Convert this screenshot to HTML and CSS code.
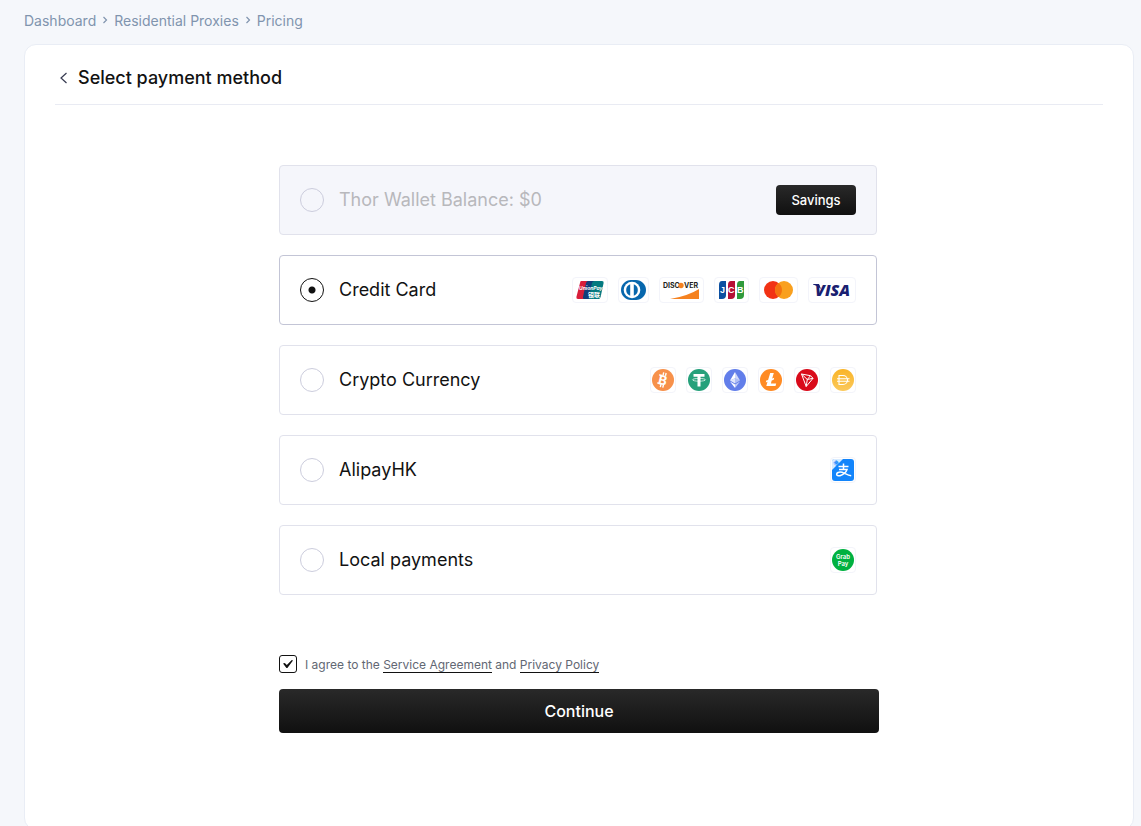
FILE: index.html
```html
<!DOCTYPE html>
<html lang="en">
<head>
  <meta charset="UTF-8" />
  <meta name="viewport" content="width=device-width, initial-scale=1.0"/>
  <title>Select payment method</title>
  <link rel="stylesheet" href="styles.css">
</head>
<body>
  <nav class="breadcrumb">
    <a href="#">Dashboard</a>
    <svg width="6" height="8" viewBox="0 0 6 8"><path d="M1.5 1l3 3-3 3"/></svg>
    <a href="#">Residential Proxies</a>
    <svg width="6" height="8" viewBox="0 0 6 8"><path d="M1.5 1l3 3-3 3"/></svg>
    <a href="#">Pricing</a>
  </nav>

  <main class="card">
    <header class="card-header">
      <a class="back" href="#" aria-label="Back">
        <svg width="8" height="12" viewBox="0 0 8 12"><path d="M6.500 1L1 6l5.500 5"/></svg>
      </a>
      <h1>Select payment method</h1>
    </header>

    <form class="payment">
      <div class="options">
        <div class="option disabled">
          <label><input type="radio" name="method" disabled> Thor Wallet Balance: $0</label>
          <button type="button" class="savings">Savings</button>
        </div>

        <div class="option selected">
          <label><input type="radio" name="method" checked> Credit Card</label>
          <div class="logos">
            <!-- UnionPay -->
            <span class="logo">
              <svg width="30" height="20" viewBox="0 0 30 20">
                <path fill="#d81e3a" d="M6 1h8l-4 18H3q-2 0-1.600-2L5 3q.3-2 1-2z"/>
                <path fill="#123f7a" d="M13 1h7l-4 18H9q-1.500 0-1-2l3-14q.5-2 2-2z"/>
                <path fill="#047a80" d="M20 1h7q2 0 1.600 2l-3 14q-.5 2-2 2H15q-1.500 0-1-2l3-14q.5-2 3-2z"/>
                <text class="union" x="4" y="10">UnionPay</text>
                <text class="union-cn" x="13" y="17">银联</text>
              </svg>
            </span>
            <!-- Diners Club -->
            <span class="logo">
              <svg width="25" height="20" viewBox="0 0 25 20">
                <path fill="#0767ad" d="M10 0h5c5.500 0 10 4.500 10 10s-4.500 10-10 10h-5C4.500 20 0 15.500 0 10S4.500 0 10 0z"/>
                <circle cx="11" cy="10" r="8.300" fill="#fff"/>
                <path fill="#0767ad" d="M9.200 4.200a6.200 6.200 0 0 0 0 11.600zM12.800 4.200a6.200 6.200 0 0 1 0 11.600z"/>
              </svg>
            </span>
            <!-- Discover -->
            <span class="logo">
              <svg width="39" height="20" viewBox="0 0 39 20">
                <path fill="#f58220" d="M37 9v10H8Q26 16 37 9z"/>
                <text class="discover" x="1" y="8">DISC</text>
                <circle cx="19" cy="5.500" r="2.700" fill="#f58220"/>
                <text class="discover" x="22" y="8">VER</text>
              </svg>
            </span>
            <!-- JCB -->
            <span class="logo">
              <svg width="29" height="20" viewBox="-1 0 29 20">
                <path fill="#0b4fa0" d="M4 1h4v14q0 4-4 4H1V5q0-4 3-4z"/>
                <path fill="#b60f35" d="M13 1h4v14q0 4-4 4h-3V5q0-4 3-4z"/>
                <path fill="#2f9a3c" d="M22 1h4v14q0 4-4 4h-3V5q0-4 3-4z"/>
                <text class="jcb" x="2" y="13">J</text>
                <text class="jcb" x="10" y="13">C</text>
                <text class="jcb" x="19" y="13">B</text>
              </svg>
            </span>
            <!-- Mastercard -->
            <span class="logo">
              <svg width="33" height="20" viewBox="-1 0 33 20">
                <circle cx="10" cy="10" r="9" fill="#f23214"/>
                <circle cx="21" cy="10" r="9" fill="#f9a01e"/>
                <path fill="#f4720f" d="M15.500 2.900a9 9 0 0 1 0 14.200 9 9 0 0 1 0-14.200z"/>
              </svg>
            </span>
            <!-- Visa -->
            <span class="logo">
              <svg width="42" height="20" viewBox="0 0 42 20">
                <path fill="#1a1f71" d="M2 4h6l2 5Q7 5.500 2 4.500z"/>
                <text class="visa" x="4" y="16">VISA</text>
              </svg>
            </span>
          </div>
        </div>

        <div class="option">
          <label><input type="radio" name="method"> Crypto Currency</label>
          <div class="logos">
            <!-- Bitcoin -->
            <span class="logo square">
              <svg width="22" height="22" viewBox="0 0 22 22">
                <circle cx="11" cy="11" r="11" fill="#f7914b"/>
                <g transform="rotate(13 11 11)">
                  <path stroke="#fff" stroke-width="1.400" d="M10 3.500v3M12.500 3.500v3M10 15.500v3M12.500 15.500v3M6 6.900h3M6 15.100h3"/>
                  <text class="coin" x="6.500" y="15.800">B</text>
                </g>
              </svg>
            </span>
            <!-- Tether -->
            <span class="logo square">
              <svg width="22" height="22" viewBox="0 0 22 22">
                <circle cx="11" cy="11" r="11" fill="#26a17b"/>
                <path fill="#fff" d="M5.500 5h11v2.800h-4V17.500h-3V7.800h-4z"/>
                <ellipse cx="11" cy="10.800" rx="6.500" ry="1.400" fill="none" stroke="#fff" stroke-width=".7"/>
              </svg>
            </span>
            <!-- Ethereum -->
            <span class="logo square">
              <svg width="22" height="22" viewBox="0 0 22 22">
                <circle cx="11" cy="11" r="11" fill="#627eea"/>
                <path fill="#fff" opacity=".7" d="M11 3v6.200l5 2.200z"/>
                <path fill="#fff" d="M11 3L6 11.400l5-2.200z"/>
                <path fill="#fff" opacity=".5" d="M11 9.200v5.200l5-3z"/>
                <path fill="#fff" opacity=".8" d="M11 9.200l-5 2.200 5 3z"/>
                <path fill="#fff" opacity=".6" d="M11 15.400V19l5-6.600z"/>
                <path fill="#fff" d="M11 19v-3.600l-5-3z"/>
              </svg>
            </span>
            <!-- Litecoin -->
            <span class="logo square">
              <svg width="22" height="22" viewBox="0 0 22 22">
                <circle cx="11" cy="11" r="11" fill="#ff8b24"/>
                <path fill="#fff" d="M10.200 4h3.600l-1.600 5.600 2-.8-.5 1.900-2 .8-.8 2.900h5.300l-.7 2.600H6.300l1.200-4.200-1.700.7.500-1.900 1.800-.7z"/>
              </svg>
            </span>
            <!-- Tron -->
            <span class="logo square">
              <svg width="22" height="22" viewBox="0 0 22 22">
                <circle cx="11" cy="11" r="11" fill="#d90a1a"/>
                <path fill="none" stroke="#fff" stroke-linejoin="round" d="M5.500 5l9 1.700 2.500 2.600L10.200 17.500zM5.500 5l5.800 5.500L14.500 6.700M17 9.300l-5.700 1.200-1.100 7"/>
              </svg>
            </span>
            <!-- Dai -->
            <span class="logo square">
              <svg width="22" height="22" viewBox="0 0 22 22">
                <defs>
                  <linearGradient id="dai" x1="0" y1="0" x2="0" y2="1">
                    <stop offset="0" stop-color="#f9b428"/>
                    <stop offset="1" stop-color="#fbc95c"/>
                  </linearGradient>
                </defs>
                <circle cx="11" cy="11" r="11" fill="url(#dai)"/>
                <path fill="none" stroke="#fff" stroke-width="1.100" d="M7 6.500h4a4.500 4.500 0 0 1 0 9H7zM5 9.800h12.500M5 12.200h12.500"/>
              </svg>
            </span>
          </div>
        </div>

        <div class="option">
          <label><input type="radio" name="method"> AlipayHK</label>
          <div class="logos">
            <span class="logo square">
              <svg width="22" height="22" viewBox="0 0 22 22">
                <rect width="22" height="22" rx="3" fill="#1385fb"/>
                <path fill="#d8ebff" d="M0 11V2q0-2 2-2h9z"/>
                <text class="hk" y="2" transform="translate(4 4) rotate(-45)">港</text>
                <path fill="none" stroke="#fff" stroke-width="1.500" d="M6.500 7.500h10M11.500 4.500v6M7 10.500h8q-1.500 4.500-7 6.200-3 .5-3.300-1.400c0-2.700 4.300-2.700 7.800-1 2.800 1.400 4.200 2.200 6.700 2.500"/>
              </svg>
            </span>
          </div>
        </div>

        <div class="option">
          <label><input type="radio" name="method"> Local payments</label>
          <div class="logos">
            <span class="logo square">
              <svg width="22" height="22" viewBox="0 0 22 22">
                <circle cx="11" cy="11" r="11" fill="#00b140"/>
                <text class="grab" x="11" y="10">Grab</text>
                <text class="grab" x="11" y="17">Pay</text>
              </svg>
            </span>
          </div>
        </div>
      </div>

      <div class="agree">
        <input type="checkbox" id="agree" checked>
        <label for="agree">I agree to the <a href="#">Service Agreement</a> and <a href="#">Privacy Policy</a></label>
      </div>
      <button type="submit" class="continue">Continue</button>
    </form>
  </main>
</body>
</html>
```
FILE: styles.css
```css
* {
  box-sizing: border-box;
}
body {
  margin: 0;
  padding: 0 7px 0 24px;
  background: #f5f7fb;
  color: #121212;
  font-family: Inter, "Liberation Sans", "Noto Sans CJK SC", sans-serif;
}
button, input {
  font-family: inherit;
  margin: 0;
}
svg {
  display: block;
}
.breadcrumb {
  display: flex;
  align-items: center;
  gap: 6px;
  height: 44px;
  padding-bottom: 4px;
  font-size: 14px;
}
.breadcrumb a {
  color: #8094ae;
  text-decoration: none;
}
.breadcrumb path, .back path {
  fill: none;
  stroke: #8094ae;
  stroke-width: 1.2;
}
.card {
  min-height: calc(100vh - 40px);
  padding: 0 30px 60px;
  background: #fff;
  border: 1px solid #e9edf5;
  border-radius: 12px;
}
.card-header {
  display: flex;
  align-items: center;
  gap: 10px;
  height: 60px;
  padding: 6px 0 0 5px;
  border-bottom: 1px solid #e9ebf3;
}
.back path {
  stroke: #363a50;
}
h1 {
  margin: 0;
  font-size: 18px;
  font-weight: 500;
}
.payment {
  max-width: 600px;
  margin: 60px auto 0;
}
.options {
  display: grid;
  gap: 20px;
  margin-right: 2px;
}
.option {
  display: flex;
  align-items: center;
  height: 70px;
  padding: 0 20px;
  border: 1px solid #e1e2ec;
  border-radius: 4px;
}
.option label {
  display: flex;
  flex: 1;
  align-items: center;
  gap: 15px;
  font-size: 18px;
  line-height: 20px;
}
.option.disabled {
  background: #f5f6fb;
  color: #b8b8bc;
}
.option.selected {
  border-color: #c3c5d6;
}
.option input {
  appearance: none;
  width: 24px;
  height: 24px;
  border: 1px solid #cccddd;
  border-radius: 50%;
}
.option input:checked {
  border-color: #121212;
  background: radial-gradient(circle, #121212 3px, transparent 4px);
}
.savings, .continue {
  border: 0;
  border-radius: 4px;
  background: linear-gradient(#292929, #101010);
  color: #fff;
  font-weight: 500;
}
.savings {
  width: 80px;
  height: 30px;
  padding: 0;
  font-size: 13px;
}
.logos {
  display: flex;
  gap: 10px;
}
.logo {
  display: flex;
  align-items: center;
  height: 26px;
  padding: 0 2px;
  border: 1px solid #f3f4fa;
  border-radius: 4px;
}
.logo.square {
  padding: 0 1px;
}
.agree {
  display: flex;
  align-items: center;
  gap: 8px;
  margin: 60px 0 16px;
  color: #626773;
  font-size: 12px;
}
.agree input {
  display: grid;
  place-items: center;
  appearance: none;
  width: 18px;
  height: 18px;
  border: 1px solid #121212;
  border-radius: 3px;
}
.agree input:checked::before {
  content: "";
  width: 10px;
  height: 8px;
  background: #121212;
  clip-path: polygon(0 45%, 18% 38%, 38% 62%, 88% 0, 100% 6%, 44% 100%, 34% 100%);
}
.agree a {
  color: inherit;
  text-decoration: none;
  border-bottom: 1px solid #121212;
}
.continue {
  display: block;
  width: 100%;
  height: 44px;
  font-size: 16px;
}
.logo text {
  fill: #fff;
  font-weight: 700;
}
.logo .union {
  font-size: 5px;
  font-style: italic;
}
.logo .union-cn {
  font-size: 6px;
}
.logo .discover {
  fill: #231f20;
  font-size: 7px;
}
.logo .jcb {
  font: 700 9px "Liberation Sans", sans-serif;
}
.logo .visa {
  fill: #1a1f71;
  font: italic 800 16px "Open Sans", sans-serif;
}
.logo .coin {
  font-size: 13px;
}
.logo .hk {
  fill: #1385fb;
  font-size: 5px;
  text-anchor: middle;
}
.logo .grab {
  font-size: 6px;
  font-weight: 600;
  text-anchor: middle;
}
```
